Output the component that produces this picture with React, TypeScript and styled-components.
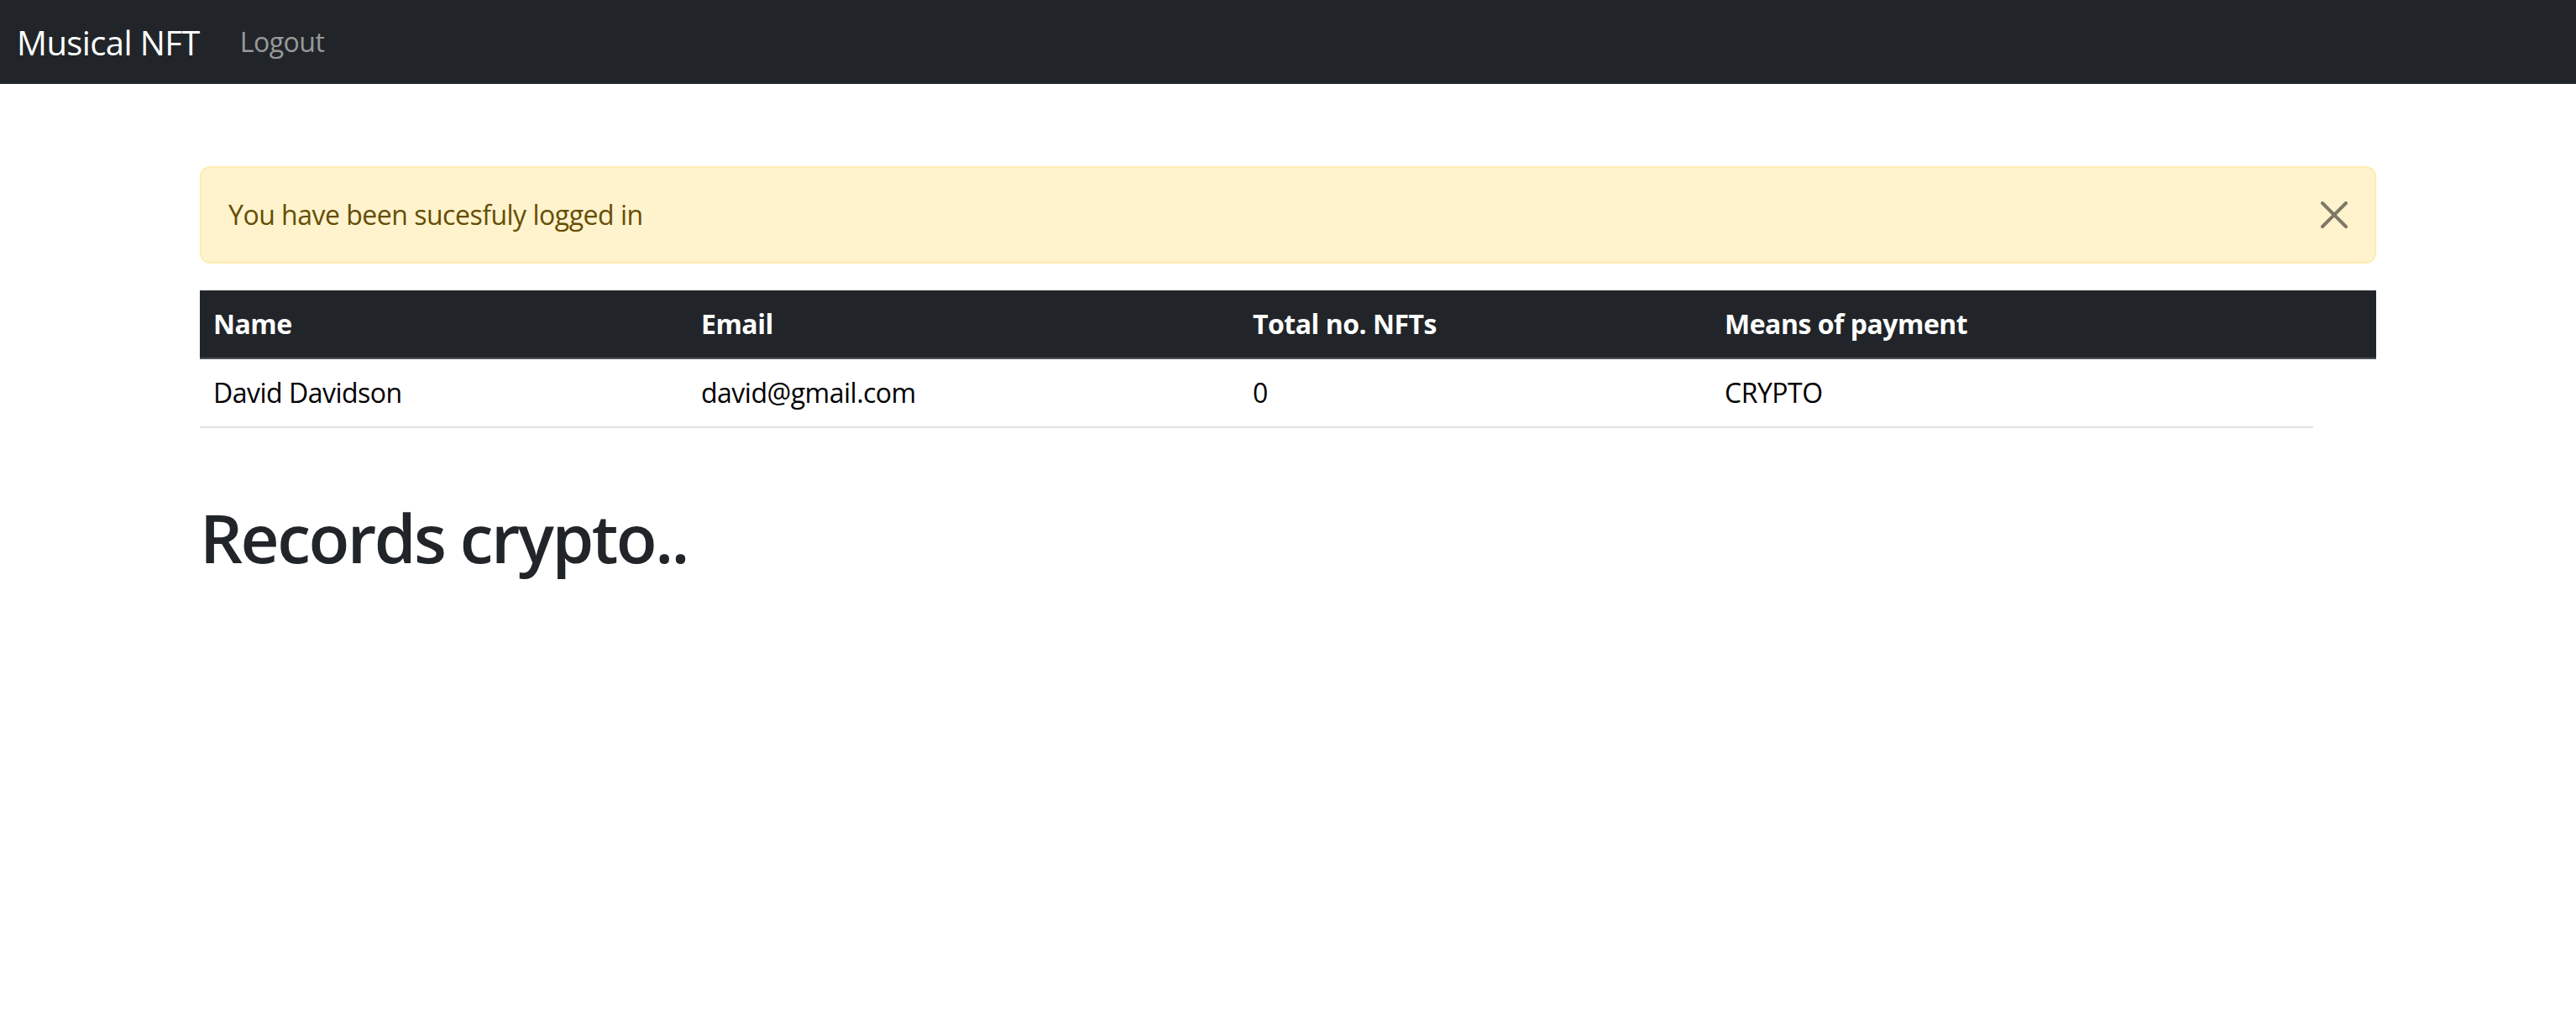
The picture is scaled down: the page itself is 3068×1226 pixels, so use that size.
import React from "react";
import styled, { createGlobalStyle } from "styled-components";

const GlobalStyle = createGlobalStyle`
  html, body {
    margin: 0;
    padding: 0;
    background: #ffffff;
  }
  body {
    font-family: "Open Sans", "Noto Sans", "Liberation Sans", sans-serif;
    color: #212529;
    -webkit-font-smoothing: antialiased;
  }
  * { box-sizing: border-box; }
`;

const Navbar = styled.nav`
  height: 100px;
  background: #212529;
  display: flex;
  align-items: center;
  padding: 0 20px;
`;

const Brand = styled.a`
  font-size: 40px;
  line-height: 60px;
  color: #ffffff;
  text-decoration: none;
  margin-right: 32px;
  margin-top: 2px;
  letter-spacing: -0.6px;
`;

const NavLink = styled.a`
  font-size: 32px;
  line-height: 48px;
  padding: 0 16px;
  color: rgba(255, 255, 255, 0.55);
  text-decoration: none;
  letter-spacing: -0.5px;
`;

const Container = styled.main`
  width: 2592px;
  margin: 0 auto;
  padding-top: 98px;
`;

const Alert = styled.div`
  display: flex;
  align-items: center;
  justify-content: space-between;
  background: #fff3cd;
  border: 2px solid #ffecb5;
  border-radius: 12px;
  color: #664d03;
  font-size: 32px;
  line-height: 48px;
  padding: 32px;
  margin-bottom: 32px;
  letter-spacing: -0.5px;
`;

const CloseButton = styled.button`
  width: 32px;
  height: 32px;
  padding: 0;
  border: 0;
  background: transparent;
  display: flex;
  align-items: center;
  justify-content: center;
  cursor: pointer;
  opacity: 0.5;
`;

const Table = styled.table`
  width: 100%;
  border-collapse: collapse;
  table-layout: fixed;
  margin-bottom: 32px;
  font-size: 32px;
  line-height: 48px;
  letter-spacing: -0.5px;
`;

const HeadCell = styled.th`
  background: #212529;
  color: #ffffff;
  font-weight: 700;
  text-align: left;
  padding: 16px;
  border-bottom: 2px solid #4d5154;
`;

const BodyCell = styled.td`
  color: #000000;
  padding: 16px;
  border-bottom: 2px solid #dee2e6;
`;

const Heading = styled.h1`
  font-size: 80px;
  line-height: 96px;
  font-weight: 600;
  color: #212529;
  margin: 82px 0 16px;
  letter-spacing: -2.5px;
`;

const CloseIcon = () => (
  <svg width="32" height="32" viewBox="0 0 32 32" aria-hidden="true">
    <path d="M2 2 L30 30 M30 2 L2 30" stroke="#000" strokeWidth="4" strokeLinecap="round" fill="none" />
  </svg>
);

const columns = [
  { label: "Name", width: 581 },
  { label: "Email", width: 657 },
  { label: "Total no. NFTs", width: 562 },
  { label: "Means of payment", width: 717 },
  { label: "", width: 75 },
];

const users = [
  { name: "David Davidson", email: "david@gmail.com", total: 0, payment: "CRYPTO" },
];

export default function App() {
  return (
    <>
      <GlobalStyle />
      <Navbar>
        <Brand href="#">Musical NFT</Brand>
        <NavLink href="#">Logout</NavLink>
      </Navbar>
      <Container>
        <Alert role="alert">
          <span>You have been sucesfuly logged in</span>
          <CloseButton aria-label="Close">
            <CloseIcon />
          </CloseButton>
        </Alert>
        <Table>
          <colgroup>
            {columns.map((c, i) => (
              <col key={i} style={{ width: c.width }} />
            ))}
          </colgroup>
          <thead>
            <tr>
              {columns.map((c, i) => (
                <HeadCell key={i}>{c.label}</HeadCell>
              ))}
            </tr>
          </thead>
          <tbody>
            {users.map((u) => (
              <tr key={u.email}>
                <BodyCell>{u.name}</BodyCell>
                <BodyCell>{u.email}</BodyCell>
                <BodyCell>{u.total}</BodyCell>
                <BodyCell>{u.payment}</BodyCell>
              </tr>
            ))}
          </tbody>
        </Table>
        <Heading>Records crypto..</Heading>
      </Container>
    </>
  );
}
